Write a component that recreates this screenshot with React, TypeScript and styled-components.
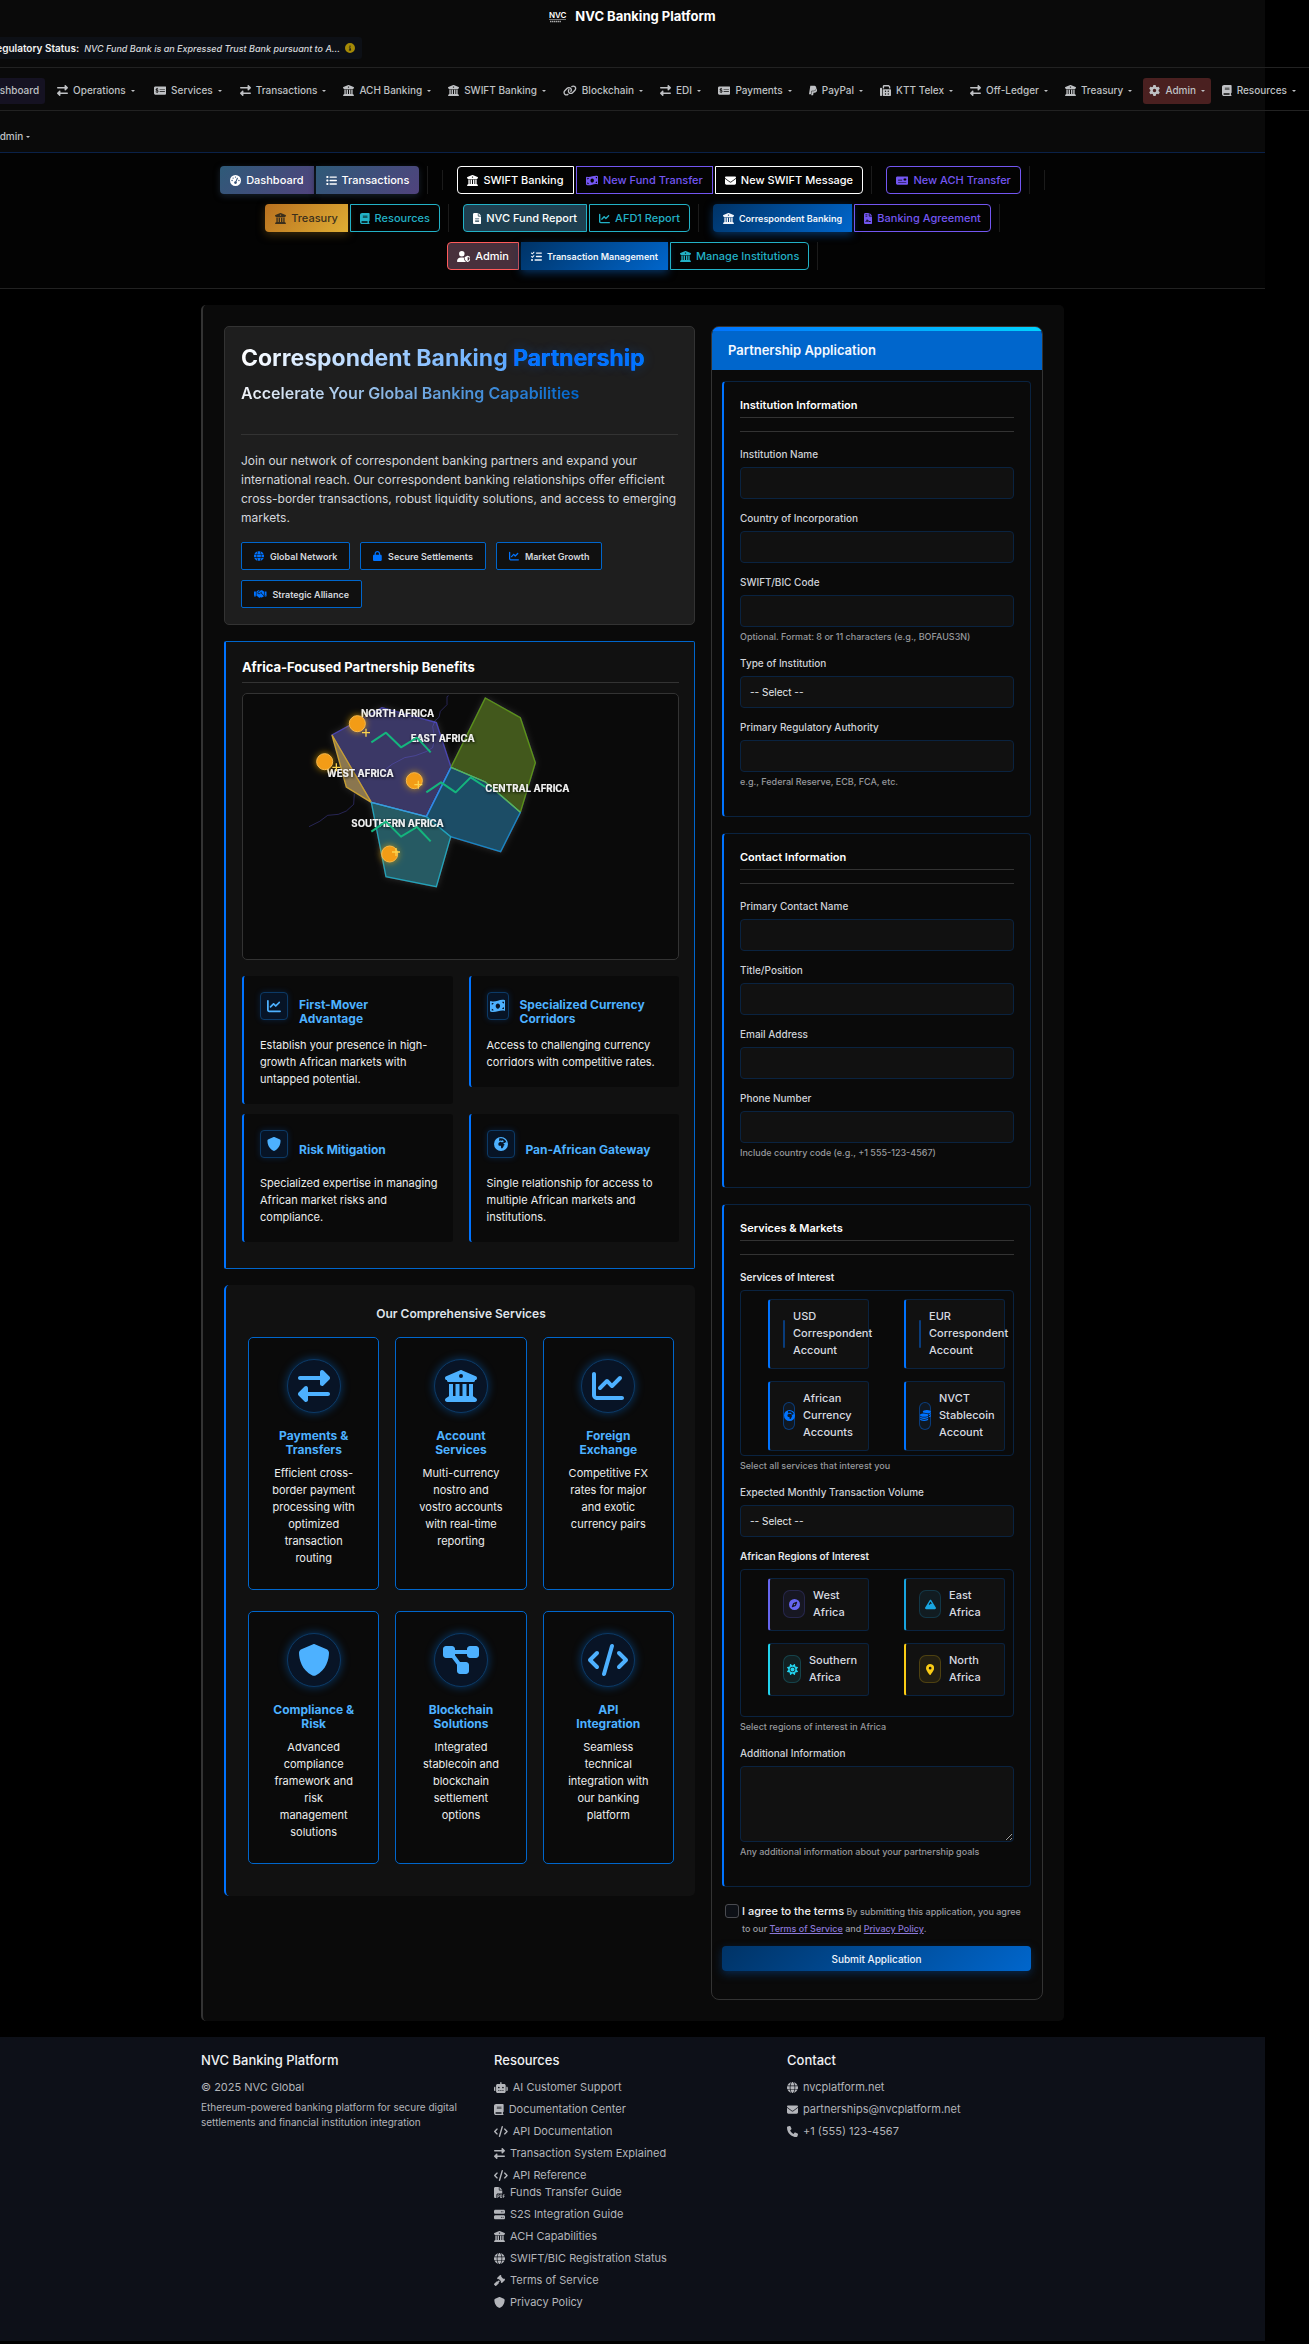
import React from "react";
import styled, { createGlobalStyle, css } from "styled-components";
import type { IconType } from "react-icons";
import {
  FaRightLeft, FaBuildingColumns, FaMoneyCheckDollar, FaLink, FaPaypal, FaFax, FaGear, FaBook,
  FaGaugeHigh, FaList, FaMoneyBillWave, FaEnvelope, FaMoneyCheck, FaFileLines, FaChartLine,
  FaFileContract, FaUserShield, FaListCheck, FaGlobe, FaLock, FaHandshake, FaEarthAfrica, FaShield,
  FaDiagramProject, FaCode, FaCoins, FaCompass, FaMountain, FaSun, FaLocationDot, FaRobot, FaFilePdf,
  FaServer, FaGavel, FaPhone, FaCircleInfo,
} from "react-icons/fa6";

const GlobalStyle = createGlobalStyle`
  *, *::before, *::after { box-sizing: border-box; }
  html { background: #000; }
  body { margin: 0; background: #000; color: #e6e8ec; font: 400 12px/17px Inter, "Liberation Sans", sans-serif; }
  #root { overflow: hidden; }
  h1, h2, h3, h4, p, ul { margin: 0; padding: 0; }
  button, input, select, textarea { font-family: inherit; }
  svg { flex: none; }
  svg[viewBox="0 0 640 512"] { width: 1.25em; }
  svg[viewBox="0 0 576 512"] { width: 1.125em; }
  svg[viewBox="0 0 448 512"] { width: 0.875em; }
  svg[viewBox="0 0 384 512"] { width: 0.75em; }
`;

const blue = "#0073ff";
const deepBlue = "#0066cc";
const sky = "#4db1ff";
const fieldBorder = "#0a2340";

const Page = styled.div`
  margin-right: 44px;
`;

/* ---------- header ---------- */
const Header = styled.header`
  background: #0a0a0a;
  border-bottom: 1px solid #0a2148;
`;
const Brand = styled.a`
  display: flex;
  align-items: center;
  justify-content: center;
  gap: 8px;
  height: 37px;
  padding-bottom: 4px;
  color: #fff;
  font-size: 13px;
  font-weight: 700;
  text-decoration: none;
`;
const StatusRow = styled.div`
  margin: 0 -44px;
  padding-bottom: 8px;
  border-bottom: 1px solid #222;
`;
const Status = styled.div`
  display: flex;
  align-items: center;
  justify-content: flex-end;
  gap: 5px;
  width: 406px;
  height: 22px;
  padding: 0 7px;
  border-radius: 3px;
  background: #0d1016;
  color: #d6d8dc;
  font-size: 9px;
  font-weight: 500;
  white-space: nowrap;
  b { color: #f2f2f2; font-size: 10px; font-weight: 600; }
  svg { color: #a58a06; font-size: 10px; }
`;
const Nav = styled.nav`
  display: flex;
  align-items: center;
  justify-content: flex-end;
  gap: 5px;
  height: 43px;
  margin: 0 -44px;
  padding: 3px 7px 0 0;
  border-bottom: 1px solid #222;
`;
const NavLink = styled.a<{ $tone?: "active" | "admin"; $wide?: boolean }>`
  display: flex;
  flex: none;
  align-items: center;
  gap: 5px;
  height: 26px;
  padding: 0 ${(p) => (p.$wide ? 7 : 6)}px;
  border-radius: 3px;
  background: ${(p) => (p.$tone === "active" ? "#151222" : p.$tone === "admin" ? "#4a2020" : "transparent")};
  color: #bfc1c4;
  font-size: 10px;
  font-weight: 500;
  text-decoration: none;
  white-space: nowrap;
  svg { font-size: 11px; }
`;
const Caret = styled.i`
  width: 4px;
  border: 2px solid transparent;
  border-top-color: currentColor;
  border-bottom: 0;
`;
const UserRow = styled.div`
  display: flex;
  align-items: center;
  height: 41px;
  margin-left: -44px;
  padding: 10px 0 0 38px;
`;
const UserLink = styled.a`
  display: flex;
  align-items: center;
  gap: 3px;
  color: #bfc1c4;
  font-size: 10px;
  font-weight: 500;
  text-decoration: none;
`;

/* ---------- quick actions ---------- */
const Actions = styled.div`
  display: flex;
  flex-direction: column;
  gap: 10px;
  padding: 13px 0 18px;
  border-bottom: 1px solid #222;
  background: #030303;
`;
const ActionRow = styled.div`
  display: flex;
  align-items: center;
  justify-content: center;
  gap: 14px;
  height: 28px;
`;
const Group = styled.div`
  display: flex;
  gap: 2px;
  padding-right: 8px;
  border-right: 1px solid #1b1b1b;
`;
const Divider = styled.span`
  width: 1px;
  height: 20px;
  background: #1b1b1b;
`;
type Tone = "soft" | "white" | "violet" | "gold" | "teal" | "tealFill" | "blue" | "red";
const tones: Record<Tone, ReturnType<typeof css>> = {
  soft: css`border-color: transparent; background: linear-gradient(135deg, #2e5a78, #50437d) border-box; color: #fff; box-shadow: 0 2px 6px #16202c;`,
  white: css`border-color: #fff; color: #fff;`,
  violet: css`border-color: #7356f1; color: #7356f1;`,
  gold: css`border-color: transparent; background: linear-gradient(135deg, #b8701f, #e0ae34) border-box; color: #3b2f1c; box-shadow: 0 3px 8px #3a2a0c;`,
  teal: css`border-color: #22b1c6; color: #22b1c6;`,
  tealFill: css`border-color: #22b1c6; background: #1e3f50; color: #fff;`,
  blue: css`border-color: transparent; background: linear-gradient(135deg, #003366, #0066cc) border-box; color: #f2f6fb; font-size: 9px; font-weight: 600; box-shadow: 0 3px 9px #06315f;`,
  red: css`border-color: #ff5a5a; background: #48303c; color: #fff;`,
};
const ActionButton = styled.button<{ $tone: Tone }>`
  display: flex;
  align-items: center;
  gap: 5px;
  height: 28px;
  padding: 0 9px;
  border: 1px solid;
  background: transparent;
  font-size: 11px;
  font-weight: 500;
  white-space: nowrap;
  cursor: pointer;
  &:first-child { border-radius: 4px 0 0 4px; }
  &:last-child { border-radius: 0 4px 4px 0; }
  &:only-child { border-radius: 4px; }
  svg { font-size: 11px; }
  ${(p) => tones[p.$tone]}
`;

/* ---------- main ---------- */
const Main = styled.main`
  display: grid;
  grid-template-columns: 471fr 332fr;
  align-items: start;
  gap: 16px;
  width: calc(100% - 32px);
  max-width: 863px;
  margin: 16px auto;
  padding: 21px;
  border-left: 2px solid #333;
  border-radius: 5px;
  background: #0a0a0a;
`;
const Column = styled.div`
  display: flex;
  flex-direction: column;
  gap: 16px;
  min-width: 0;
`;
const Hero = styled.section`
  padding: 16px;
  border: 1px solid #333;
  border-radius: 5px;
  background: #1e1e1e;
`;
const Title = styled.h1`
  width: fit-content;
  background: linear-gradient(90deg, #fff, #0a7cff);
  background-clip: text;
  color: transparent;
  font-size: 23px;
  font-weight: 700;
  line-height: 30px;
  span { color: ${blue}; text-shadow: 0 0 12px rgba(0, 115, 255, 0.3); }
`;
const Lead = styled.p`
  width: fit-content;
  margin: 10px 0 31px;
  background: linear-gradient(90deg, #f2f4f8, #0066cc);
  background-clip: text;
  color: transparent;
  font-size: 16px;
  font-weight: 600;
  line-height: 20px;
`;
const Copy = styled.p`
  padding-top: 16px;
  border-top: 1px solid #333;
  color: #d4d7dd;
  font-size: 12px;
  line-height: 19px;
`;
const Badges = styled.ul`
  display: flex;
  flex-wrap: wrap;
  gap: 10px;
  margin-top: 15px;
  list-style: none;
`;
const Badge = styled.li`
  display: flex;
  align-items: center;
  gap: 6px;
  height: 28px;
  padding: 0 12px;
  border: 1px solid ${deepBlue};
  border-radius: 2px;
  background: #101010;
  color: #d4d7dd;
  font-size: 9px;
  font-weight: 600;
  svg { color: ${blue}; font-size: 10px; }
`;
const Benefits = styled.section`
  padding: 17px 15px 26px 16px;
  border: 1px solid ${deepBlue};
  border-left: 2px solid ${blue};
  border-radius: 2px;
  background: #111;
`;
const BenefitsTitle = styled.h2`
  padding-bottom: 6px;
  border-bottom: 1px solid #333;
  color: #fff;
  font-size: 13px;
  font-weight: 700;
  line-height: 17px;
`;
const MapBox = styled.div`
  margin: 10px 0 16px;
  border: 1px solid #333;
  border-radius: 5px;
  background: #0a0a0a;
  svg { display: block; width: 100%; height: auto; }
`;
const Features = styled.div`
  display: grid;
  grid-template-columns: 1fr 1fr;
  align-items: start;
  gap: 10px 16px;
`;
const Feature = styled.article`
  padding: 16px 12px 16px 16px;
  border-left: 2px solid ${blue};
  border-radius: 3px;
  background: #0a0a0a;
`;
const FeatureHead = styled.div`
  display: flex;
  gap: 11px;
  height: 40px;
  margin: 0 9px 5px 0;
  h3 { align-self: center; color: ${sky}; font-size: 12px; font-weight: 700; line-height: 14px; }
`;
const FeatureIcon = styled.span<{ $narrow?: boolean }>`
  display: flex;
  flex: none;
  align-items: center;
  justify-content: center;
  width: ${(p) => (p.$narrow ? 22 : 28)}px;
  height: 28px;
  border: 1px solid #0c3a66;
  border-radius: 4px;
  background: #071426;
  box-shadow: 0 0 6px rgba(0, 115, 255, 0.2);
  color: ${sky};
  font-size: 14px;
`;
const Small = styled.p`
  color: #eceded;
  font-size: 11px;
  line-height: 17px;
`;
const Services = styled.section`
  padding: 20px 21px 32px 22px;
  border-left: 2px solid ${blue};
  border-radius: 5px;
  background: #111;
  h2 { margin-bottom: 15px; color: #dfe3ea; font-size: 12px; font-weight: 600; line-height: 17px; text-align: center; }
`;
const ServiceGrid = styled.div`
  display: grid;
  grid-template-columns: repeat(3, 1fr);
  gap: 21px 16px;
`;
const Service = styled.article`
  display: flex;
  flex-direction: column;
  align-items: center;
  padding: 21px 22px 22px;
  border: 1px solid ${deepBlue};
  border-radius: 5px;
  background: #0a0a0a;
  text-align: center;
  h3 { margin: 16px 0 8px; color: ${sky}; font-size: 12px; font-weight: 700; line-height: 14px; }
`;
const ServiceIcon = styled.span`
  display: flex;
  align-items: center;
  justify-content: center;
  width: 54px;
  height: 54px;
  border: 1px solid #0c3a66;
  border-radius: 50%;
  background: #081426;
  box-shadow: 0 0 10px rgba(0, 130, 255, 0.4);
  color: ${sky};
  font-size: 32px;
`;

/* ---------- form ---------- */
const Form = styled.form`
  overflow: hidden;
  border: 1px solid #333;
  border-radius: 8px;
  background: #0a0a0a;
`;
const FormHead = styled.div`
  padding: 0 16px;
  background: linear-gradient(90deg, #0073ff, #00d4ff) top / 100% 4px no-repeat ${deepBlue};
  h2 { padding-top: 3px; color: #f4f8ff; font-size: 13px; font-weight: 600; line-height: 40px; }
`;
const FormBody = styled.div`
  display: flex;
  flex-direction: column;
  gap: 16px;
  padding: 11px 11px 28px 10px;
`;
const Section = styled.fieldset`
  min-width: 0;
  margin: 0;
  padding: 16px 16px 15px;
  border: 1px solid ${fieldBorder};
  border-left: 2px solid ${blue};
  border-radius: 4px;
`;
const SectionTitle = styled.h3`
  margin-bottom: 13px;
  padding-bottom: 4px;
  border-bottom: 1px solid #333;
  color: #fff;
  font-size: 11px;
  font-weight: 600;
  line-height: 15px;
`;
const Fields = styled.div`
  padding-top: 15px;
  border-top: 1px solid #333;
`;
const Field = styled.div`
  display: flex;
  flex-direction: column;
  margin-bottom: 12px;
`;
const Label = styled.label<{ $strong?: boolean }>`
  margin-bottom: 5px;
  color: ${(p) => (p.$strong ? "#e6e8ec" : "#cfd2d8")};
  font-size: 10px;
  font-weight: ${(p) => (p.$strong ? 600 : 500)};
  line-height: 15px;
`;
const control = css`
  width: 100%;
  height: 32px;
  padding: 0 9px;
  border: 1px solid ${fieldBorder};
  border-radius: 4px;
  background: #111;
  color: #e6e8ec;
  font-size: 10px;
  outline: none;
`;
const Input = styled.input`${control}`;
const Select = styled.select`${control} appearance: none;`;
const TextArea = styled.textarea`
  ${control}
  display: block;
  height: 76px;
  padding: 8px 9px;
  resize: vertical;
`;
const Help = styled.small`
  margin-top: 2px;
  color: #97999d;
  font-size: 9px;
  font-weight: 500;
  line-height: 15px;
`;
const Choices = styled.div<{ $spare?: boolean }>`
  display: grid;
  grid-template-columns: 1fr 1fr;
  gap: 12px 35px;
  padding: 8px 8px ${(p) => (p.$spare ? 20 : 4)}px 27px;
  border: 1px solid ${fieldBorder};
  border-radius: 4px;
`;
const Choice = styled.label<{ $color: string }>`
  display: flex;
  align-items: center;
  gap: 8px;
  min-width: 0;
  padding: 8px 0 9px 13px;
  border: 1px solid ${fieldBorder};
  border-left: 2px solid ${(p) => p.$color};
  border-radius: 3px;
  background: #111;
  color: #d8dbe0;
  font-size: 11px;
  font-weight: 500;
  line-height: 17px;
`;
const HiddenCheck = styled.input`
  position: absolute;
  width: 1px;
  height: 1px;
  margin: 0;
  opacity: 0;
`;
const Pill = styled.span<{ $color: string; $w: number }>`
  display: flex;
  flex: none;
  align-items: center;
  justify-content: center;
  width: ${(p) => p.$w}px;
  height: 28px;
  border: 1px solid ${(p) => p.$color}${(p) => (p.$color === blue ? "66" : "33")};
  border-radius: 7px;
  background: ${(p) => p.$color}14;
  color: ${(p) => p.$color};
  font-size: 11px;
`;
const Terms = styled.div`
  display: flex;
  align-items: flex-start;
  gap: 3px;
  padding: 0 0 0 3px;
`;
const TermsBox = styled.input`
  flex: none;
  appearance: none;
  width: 14px;
  height: 14px;
  margin: 1px 0 0;
  border: 1px solid #4a4b50;
  border-radius: 3px;
  background: #0d1016;
`;
const TermsText = styled.p`
  color: #9b9da2;
  font-size: 9px;
  font-weight: 500;
  line-height: 17px;
  label { color: #f0f1f3; font-size: 11px; }
  a { color: #8b78d8; }
`;
const Submit = styled.button`
  height: 25px;
  margin-top: -7px;
  border: 0;
  border-radius: 4px;
  background: linear-gradient(135deg, #003366, #0066cc);
  box-shadow: 0 3px 8px #08284c;
  color: #eef3fa;
  font-size: 10px;
  font-weight: 500;
`;

/* ---------- footer ---------- */
const Footer = styled.footer`
  background: #0d1018;
`;
const FooterGrid = styled.div`
  display: grid;
  grid-template-columns: repeat(3, 1fr);
  gap: 16px;
  width: calc(100% - 32px);
  max-width: 863px;
  margin: 0 auto;
  padding: 14px 0 30px;
  h2 { margin-bottom: 10px; color: #f0f1f3; font-size: 13px; font-weight: 500; line-height: 18px; }
`;
const FooterText = styled.p<{ $small?: boolean }>`
  margin-bottom: 4px;
  color: #b3b5ba;
  font-size: ${(p) => (p.$small ? 10 : 11)}px;
  line-height: ${(p) => (p.$small ? 15 : 17)}px;
`;
const Links = styled.ul`
  display: flex;
  flex-direction: column;
  gap: 5px;
  list-style: none;
`;
const FooterLink = styled.a`
  display: flex;
  align-items: center;
  gap: 5px;
  color: #b3b5ba;
  font-size: 11px;
  line-height: 17px;
  text-decoration: none;
`;

const navItems: [IconType, string][] = [
  [FaRightLeft, "Operations"], [FaMoneyCheckDollar, "Services"], [FaRightLeft, "Transactions"],
  [FaBuildingColumns, "ACH Banking"], [FaBuildingColumns, "SWIFT Banking"], [FaLink, "Blockchain"],
  [FaRightLeft, "EDI"], [FaMoneyCheckDollar, "Payments"], [FaPaypal, "PayPal"], [FaFax, "KTT Telex"],
  [FaRightLeft, "Off-Ledger"], [FaBuildingColumns, "Treasury"], [FaGear, "Admin"], [FaBook, "Resources"],
];

type ActionDef = [Tone, IconType, string];
const actionRows: (ActionDef[] | "divider")[][] = [
  [
    [["soft", FaGaugeHigh, "Dashboard"], ["soft", FaList, "Transactions"]],
    "divider",
    [["white", FaBuildingColumns, "SWIFT Banking"], ["violet", FaMoneyBillWave, "New Fund Transfer"], ["white", FaEnvelope, "New SWIFT Message"]],
    [["violet", FaMoneyCheck, "New ACH Transfer"]],
    "divider",
  ],
  [
    [["gold", FaBuildingColumns, "Treasury"], ["teal", FaBook, "Resources"]],
    [["tealFill", FaFileLines, "NVC Fund Report"], ["teal", FaChartLine, "AFD1 Report"]],
    [["blue", FaBuildingColumns, "Correspondent Banking"], ["violet", FaFileContract, "Banking Agreement"]],
  ],
  [
    [["red", FaUserShield, "Admin"], ["blue", FaListCheck, "Transaction Management"], ["teal", FaBuildingColumns, "Manage Institutions"]],
  ],
];

const features: [IconType, string, string][] = [
  [FaChartLine, "First-Mover Advantage", "Establish your presence in high-growth African markets with untapped potential."],
  [FaMoneyBillWave, "Specialized Currency Corridors", "Access to challenging currency corridors with competitive rates."],
  [FaShield, "Risk Mitigation", "Specialized expertise in managing African market risks and compliance."],
  [FaEarthAfrica, "Pan-African Gateway", "Single relationship for access to multiple African markets and institutions."],
];

const services: [IconType, string, string][] = [
  [FaRightLeft, "Payments & Transfers", "Efficient cross-border payment processing with optimized transaction routing"],
  [FaBuildingColumns, "Account Services", "Multi-currency nostro and vostro accounts with real-time reporting"],
  [FaChartLine, "Foreign Exchange", "Competitive FX rates for major and exotic currency pairs"],
  [FaShield, "Compliance & Risk", "Advanced compliance framework and risk management solutions"],
  [FaDiagramProject, "Blockchain Solutions", "Integrated stablecoin and blockchain settlement options"],
  [FaCode, "API Integration", "Seamless technical integration with our banking platform"],
];

const resourceLinks: [IconType, string][][] = [
  [[FaRobot, "AI Customer Support"]], [[FaBook, "Documentation Center"]], [[FaCode, "API Documentation"]],
  [[FaRightLeft, "Transaction System Explained"]],
  [[FaCode, "API Reference"], [FaFilePdf, "Funds Transfer Guide"]],
  [[FaServer, "S2S Integration Guide"]], [[FaBuildingColumns, "ACH Capabilities"]],
  [[FaGlobe, "SWIFT/BIC Registration Status"]], [[FaGavel, "Terms of Service"]], [[FaShield, "Privacy Policy"]],
];

const contactLinks: [IconType, string][][] = [
  [[FaGlobe, "nvcplatform.net"]], [[FaEnvelope, "partnerships@nvcplatform.net"]], [[FaPhone, "+1 (555) 123-4567"]],
];

function Logo() {
  return (
    <svg width="18" height="12" viewBox="0 0 18 12" aria-hidden="true">
      <text x="0" y="7" fill="#fff" fontSize="8" fontWeight="600" fontFamily="Inter, sans-serif">NVC</text>
      <path d="M0 8.5h17" stroke="#bbb" strokeWidth="0.6" />
      <path d="M1 10.5h11" stroke="#aaa" strokeWidth="1.6" strokeDasharray="1.4 0.5" />
    </svg>
  );
}

const regions = [
  { points: "395,314 545,232 708,277 752,411 678,559 513,516", fill: "#3a3866", stroke: "#4a44b5" },
  { points: "395,314 438,470 513,516", fill: "#8a7650", stroke: "#c9a02f" },
  { points: "855,203 960,262 1005,397 960,546 855,455 752,411", fill: "#42591c", stroke: "#5c9417" },
  { points: "752,411 855,455 960,546 901,664 751,619 678,559", fill: "#1f4d66", stroke: "#1786c6" },
  { points: "513,516 678,559 751,619 708,769 557,739", fill: "#255a63", stroke: "#22a3ba" },
];
const trends = [
  "513,336 557,307 602,351 650,322 691,366",
  "678,486 722,456 766,486 811,441 855,470",
  "513,604 557,574 602,619 650,590 691,633",
];
const hubs = [[471, 280, 497, 307], [373, 394, 408, 411], [642, 451, 654, 463], [568, 671, 587, 665]];
const mapLabels: [number, number, string][] = [
  [482, 261, "NORTH AFRICA"], [631, 336, "EAST AFRICA"], [379, 441, "WEST AFRICA"],
  [855, 486, "CENTRAL AFRICA"], [453, 591, "SOUTHERN AFRICA"],
];

function AfricaMap() {
  return (
    <svg viewBox="128 191 1305 795" role="img" aria-label="Map of African regions">
      <defs>
        <filter id="glow" x="-100%" y="-100%" width="300%" height="300%">
          <feDropShadow dx="0" dy="0" stdDeviation="11" floodColor="#f5b400" floodOpacity="0.7" />
        </filter>
        <filter id="halo" x="-20%" y="-20%" width="140%" height="140%">
          <feDropShadow dx="0" dy="0" stdDeviation="9" floodColor="#ffffff" floodOpacity="0.14" />
        </filter>
        <filter id="ink" x="-20%" y="-60%" width="140%" height="220%">
          <feDropShadow dx="2" dy="3" stdDeviation="5" floodColor="#000" floodOpacity="0.95" />
        </filter>
      </defs>
      <g strokeWidth="4" filter="url(#halo)">
        {regions.map((r) => <polygon key={r.points} {...r} />)}
      </g>
      <path d="M513 516 678 559" stroke="#3c9be0" strokeWidth="4" />
      <path d="M678 559 752 411" stroke="#3488e6" strokeWidth="4" />
      <path d="M752 411 855 455 960 546" stroke="#5fb553" strokeWidth="4" fill="none" />
      <path
        d="M745 196l-5 3 0 24-20 20-4 18-12 10-7 18 6 35-6 28-20 12-32 12-32 6-38 20-28 22M462 490l-2 32-22 20-24 10-32 3-24 18-32 16"
        fill="none" stroke="#6a62ff" strokeOpacity="0.3" strokeWidth="3"
      />
      <g filter="url(#ink)" fill="#f3f3f3" fontFamily="Inter, sans-serif" fontSize="29" fontWeight="700">
        {mapLabels.map(([x, y, t]) => <text key={t} x={x} y={y}>{t}</text>)}
      </g>
      <g fill="none" stroke="#14b57d" strokeWidth="6" strokeLinejoin="round">
        {trends.map((t) => <polyline key={t} points={t} />)}
      </g>
      {hubs.map(([x, y, px, py]) => (
        <g key={x}>
          <circle cx={x} cy={y} r="24" fill="#f39c12" stroke="#f8b84a" strokeWidth="3" filter="url(#glow)" />
          <path d={`M${px - 12} ${py}h24M${px} ${py - 12}v24`} stroke="#fcd34d" strokeWidth="4" />
        </g>
      ))}
    </svg>
  );
}

function TextField({ id, label, help }: { id: string; label: string; help?: string }) {
  return (
    <Field>
      <Label htmlFor={id}>{label}</Label>
      <Input id={id} type="text" />
      {help && <Help>{help}</Help>}
    </Field>
  );
}

function SelectField({ id, label }: { id: string; label: string }) {
  return (
    <Field>
      <Label htmlFor={id}>{label}</Label>
      <Select id={id}><option>-- Select --</option></Select>
    </Field>
  );
}

function FormSection({ title, children }: { title: string; children: React.ReactNode }) {
  return (
    <Section>
      <SectionTitle>{title}</SectionTitle>
      <Fields>{children}</Fields>
    </Section>
  );
}

function Option({ text, icon: Icon, color = blue, w }: { text: string; icon?: IconType; color?: string; w: number }) {
  return (
    <Choice $color={color}>
      <HiddenCheck type="checkbox" />
      <Pill $color={color} $w={w}>{Icon && <Icon />}</Pill>
      <span>{text}</span>
    </Choice>
  );
}

function LinkList({ rows }: { rows: [IconType, string][][] }) {
  return (
    <Links>
      {rows.map((row) => (
        <li key={row[0][1]}>
          {row.map(([Icon, text]) => <FooterLink href="#" key={text}><Icon />{text}</FooterLink>)}
        </li>
      ))}
    </Links>
  );
}

export default function App() {
  return (
    <>
      <GlobalStyle />
      <Page>
        <Header>
          <Brand href="#"><Logo />NVC Banking Platform</Brand>
          <StatusRow>
            <Status>
              <b>Regulatory Status:</b>
              <em>NVC Fund Bank is an Expressed Trust Bank pursuant to A...</em>
              <FaCircleInfo />
            </Status>
          </StatusRow>
          <Nav>
            <NavLink href="#" $tone="active"><FaGaugeHigh />Dashboard</NavLink>
            {navItems.map(([Icon, text], i) => (
              <NavLink href="#" key={text} $wide={i < 2} $tone={text === "Admin" ? "admin" : undefined}>
                <Icon />{text}<Caret />
              </NavLink>
            ))}
          </Nav>
          <UserRow><UserLink href="#">admin<Caret /></UserLink></UserRow>
        </Header>

        <Actions>
          {actionRows.map((row, i) => (
            <ActionRow key={i}>
              {row.map((group, j) =>
                group === "divider" ? <Divider key={j} /> : (
                  <Group key={j}>
                    {group.map(([tone, Icon, text]) => (
                      <ActionButton type="button" key={text} $tone={tone}><Icon />{text}</ActionButton>
                    ))}
                  </Group>
                ),
              )}
            </ActionRow>
          ))}
        </Actions>

        <Main>
          <Column>
            <Hero>
              <Title>Correspondent Banking <span>Partnership</span></Title>
              <Lead>Accelerate Your Global Banking Capabilities</Lead>
              <Copy>
                Join our network of correspondent banking partners and expand your international reach. Our
                correspondent banking relationships offer efficient cross-border transactions, robust liquidity
                solutions, and access to emerging markets.
              </Copy>
              <Badges>
                <Badge><FaGlobe />Global Network</Badge>
                <Badge><FaLock />Secure Settlements</Badge>
                <Badge><FaChartLine />Market Growth</Badge>
                <Badge><FaHandshake />Strategic Alliance</Badge>
              </Badges>
            </Hero>

            <Benefits>
              <BenefitsTitle>Africa-Focused Partnership Benefits</BenefitsTitle>
              <MapBox><AfricaMap /></MapBox>
              <Features>
                {features.map(([Icon, title, text], i) => (
                  <Feature key={title}>
                    <FeatureHead>
                      <FeatureIcon $narrow={i === 1}><Icon /></FeatureIcon>
                      <h3>{title}</h3>
                    </FeatureHead>
                    <Small>{text}</Small>
                  </Feature>
                ))}
              </Features>
            </Benefits>

            <Services>
              <h2>Our Comprehensive Services</h2>
              <ServiceGrid>
                {services.map(([Icon, title, text]) => (
                  <Service key={title}>
                    <ServiceIcon><Icon /></ServiceIcon>
                    <h3>{title}</h3>
                    <Small>{text}</Small>
                  </Service>
                ))}
              </ServiceGrid>
            </Services>
          </Column>

          <Form onSubmit={(e) => e.preventDefault()}>
            <FormHead><h2>Partnership Application</h2></FormHead>
            <FormBody>
              <FormSection title="Institution Information">
                <TextField id="name" label="Institution Name" />
                <TextField id="country" label="Country of Incorporation" />
                <TextField id="swift" label="SWIFT/BIC Code" help="Optional. Format: 8 or 11 characters (e.g., BOFAUS3N)" />
                <SelectField id="type" label="Type of Institution" />
                <TextField id="authority" label="Primary Regulatory Authority" help="e.g., Federal Reserve, ECB, FCA, etc." />
              </FormSection>
              <FormSection title="Contact Information">
                <TextField id="contact" label="Primary Contact Name" />
                <TextField id="title" label="Title/Position" />
                <TextField id="email" label="Email Address" />
                <TextField id="phone" label="Phone Number" help="Include country code (e.g., +1 555-123-4567)" />
              </FormSection>
              <FormSection title="Services & Markets">
                <Field>
                  <Label as="span" $strong>Services of Interest</Label>
                  <Choices>
                    <Option text="USD Correspondent Account" w={2} />
                    <Option text="EUR Correspondent Account" w={2} />
                    <Option text="African Currency Accounts" icon={FaEarthAfrica} w={12} />
                    <Option text="NVCT Stablecoin Account" icon={FaCoins} w={12} />
                  </Choices>
                  <Help>Select all services that interest you</Help>
                </Field>
                <SelectField id="volume" label="Expected Monthly Transaction Volume" />
                <Field>
                  <Label as="span" $strong>African Regions of Interest</Label>
                  <Choices $spare>
                    <Option text="West Africa" icon={FaCompass} color="#6666f0" w={22} />
                    <Option text="East Africa" icon={FaMountain} color="#18a5e0" w={22} />
                    <Option text="Southern Africa" icon={FaSun} color="#22d3ee" w={18} />
                    <Option text="North Africa" icon={FaLocationDot} color="#facc15" w={22} />
                  </Choices>
                  <Help>Select regions of interest in Africa</Help>
                </Field>
                <Field>
                  <Label htmlFor="info">Additional Information</Label>
                  <TextArea id="info" />
                  <Help>Any additional information about your partnership goals</Help>
                </Field>
              </FormSection>
              <Terms>
                <TermsBox id="terms" type="checkbox" />
                <TermsText>
                  <label htmlFor="terms">I agree to the terms</label> By submitting this application, you agree
                  to{"\u00a0"}our <a href="#">Terms of Service</a> and <a href="#">Privacy Policy</a>.
                </TermsText>
              </Terms>
              <Submit type="submit">Submit Application</Submit>
            </FormBody>
          </Form>
        </Main>

        <Footer>
          <FooterGrid>
            <div>
              <h2>NVC Banking Platform</h2>
              <FooterText>© 2025 NVC Global</FooterText>
              <FooterText $small>
                Ethereum-powered banking platform for secure digital settlements and financial institution integration
              </FooterText>
            </div>
            <div><h2>Resources</h2><LinkList rows={resourceLinks} /></div>
            <div><h2>Contact</h2><LinkList rows={contactLinks} /></div>
          </FooterGrid>
        </Footer>
      </Page>
    </>
  );
}
